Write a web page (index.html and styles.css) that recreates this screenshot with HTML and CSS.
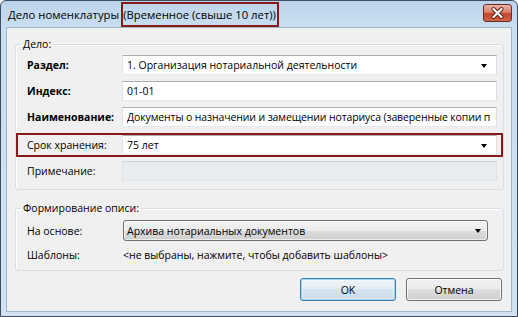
FILE: index.html
```html
<!DOCTYPE html>
<html lang="ru">
<head>
<meta charset="utf-8">
<title>Дело номенклатуры</title>
<link rel="stylesheet" href="styles.css">
</head>
<body>
<div class="window">
  <div class="titlebar">
    <span class="t1">Дело номенклатуры</span>
    <span class="hl">(Временное (свыше 10 лет))</span>
    <div class="close">
      <svg width="29" height="18" viewBox="0 0 29 18">
        <path d="M10.5 5 L18.5 13 M18.5 5 L10.5 13" stroke="#5a1d12" stroke-width="4" stroke-linecap="round"/>
        <path d="M10.5 5 L18.5 13 M18.5 5 L10.5 13" stroke="#ffffff" stroke-width="2.2" stroke-linecap="round"/>
      </svg>
    </div>
  </div>
  <div class="client">
    <fieldset class="group g1">
      <legend>Дело:</legend>
      <div class="rows">
        <div class="row"><label class="b">Раздел:</label><div class="field combo"><span class="val">1. Организация нотариальной деятельности</span><span class="arrow"></span></div></div>
        <div class="row"><label class="b">Индекс:</label><div class="field"><span class="val">01-01</span></div></div>
        <div class="row"><label class="b">Наименование:</label><div class="field"><span class="val name">Документы о назначении и замещении нотариуса (заверенные копии п</span></div></div>
        <div class="row hlrow"><label>Срок хранения:</label><div class="field combo"><span class="val">75 лет</span><span class="arrow"></span></div></div>
        <div class="row"><label class="muted">Примечание:</label><div class="field disabled"></div></div>
      </div>
    </fieldset>
    <fieldset class="group g2">
      <legend>Формирование описи:</legend>
      <div class="rows rows2">
        <div class="row row-btn"><label>На основе:</label><div class="dropdown"><span class="val">Архива нотариальных документов</span><span class="arrow"></span></div></div>
        <div class="row row-tpl"><label>Шаблоны:</label><span class="link">&lt;не выбраны, нажмите, чтобы добавить шаблоны&gt;</span></div>
      </div>
    </fieldset>
    <div class="buttons">
      <button class="btn default">OK</button>
      <button class="btn">Отмена</button>
    </div>
  </div>
</div>
</body>
</html>
```
FILE: styles.css
```css
* { box-sizing: border-box; }
html, body { margin: 0; padding: 0; }
body {
  width: 518px;
  height: 317px;
  overflow: hidden;
  background: #ffffff;
  font-family: "Open Sans", "Segoe UI", sans-serif;
  font-size: 10.5px;
  color: #000;
}
.window {
  width: 518px;
  height: 317px;
  border: 1px solid #3d4d5e;
  border-radius: 6px 6px 0 0;
  background: linear-gradient(180deg, #bcd4eb 0px, #cadef1 27px, #d0e2f3 100%);
  padding: 0 5px 4px 5px;
  display: flex;
  flex-direction: column;
}
.titlebar {
  height: 26px;
  display: flex;
  align-items: flex-end;
  flex: none;
  font-size: 11.3px;
}
.t1 {
  height: 25px;
  display: flex;
  align-items: center;
  padding-left: 2px;
  margin-right: 2px;
}
.hl {
  height: 25px;
  display: flex;
  align-items: center;
  border: 2px solid #8a1a1a;
  padding: 0 1px 0 0;
}
.close {
  align-self: flex-start;
  margin: 3px 0 0 auto;
  width: 29px;
  height: 18px;
  border: 1px solid #6e2b22;
  border-radius: 3px;
  background: linear-gradient(180deg, #eab3a6 0%, #d9806c 45%, #c5432c 55%, #d0664c 100%);
  display: flex;
  align-items: center;
  justify-content: center;
}
.close svg { display: block; margin: -1px; }
.client {
  flex: 1;
  background: #f0f0f0;
  border: 1px solid #a3b6c9;
  padding: 9px 7px 0 8px;
  display: flex;
  flex-direction: column;
}
.group {
  margin: 0;
  padding: 0 0 8px 0;
  border: 1px solid #d5dfe5;
  border-radius: 3px;
  min-width: 0;
  box-shadow: inset 1px 1px 0 #ffffff;
}
.group legend {
  margin-left: 5px;
  padding: 0 2px;
  line-height: 15px;
}
.rows {
  display: flex;
  flex-direction: column;
  gap: 6px;
  padding-top: 3px;
}
.row {
  display: flex;
  align-items: center;
  height: 20px;
  padding: 0 6px 0 11px;
}
.row label {
  width: 95px;
  flex: none;
  white-space: nowrap;
}
.row label.b { font-weight: bold; }
.field {
  flex: 1;
  min-width: 0;
  height: 20px;
  border: 1px solid;
  border-color: #abadb3 #dbdfe6 #e3e9ef #e2e3ea;
  background: #ffffff;
  padding-left: 4px;
  display: flex;
  align-items: center;
  white-space: nowrap;
  overflow: hidden;
}
.field .val { flex: 1; overflow: hidden; }
.field .name { letter-spacing: -0.12px; }
.arrow {
  flex: none;
  width: 0;
  height: 0;
  border-left: 3.5px solid transparent;
  border-right: 3.5px solid transparent;
  border-top: 4px solid #000;
  margin: 1px 9px 0 4px;
}
.hlrow {
  height: 24px;
  border: 2px solid #8a1a1a;
  padding: 0 4px 0 9px;
  margin-bottom: -2px;
}
.field.disabled {
  background: #e8ecef;
  border-color: #cdd4da #dde2e6 #e3e7ea #dde2e6;
}
.g2 { margin-top: 11px; padding-bottom: 5px; }
.rows2 { gap: 4px; padding-top: 4px; }
.row-btn { height: 21px; padding-right: 15px; }
.row-btn label, .row-tpl label { width: 96px; }
.dropdown {
  flex: 1;
  height: 21px;
  border: 1px solid #707070;
  border-radius: 3px;
  background: linear-gradient(180deg, #f2f2f2 0%, #ebebeb 50%, #dddddd 50%, #cfcfcf 100%);
  box-shadow: inset 0 0 0 1px rgba(255,255,255,0.6);
  padding-left: 3px;
  display: flex;
  align-items: center;
  white-space: nowrap;
}
.dropdown .val { flex: 1; }
.dropdown .arrow { margin-right: 6px; }
.link { white-space: nowrap; }
.buttons {
  display: flex;
  justify-content: flex-end;
  gap: 10px;
  margin-top: 7px;
  padding-right: 2px;
}
.btn {
  width: 96px;
  height: 23px;
  font: inherit;
  color: #000;
  border: 1px solid #707070;
  border-radius: 3px;
  background: linear-gradient(180deg, #f2f2f2 0%, #ebebeb 50%, #dddddd 50%, #cfcfcf 100%);
  box-shadow: inset 0 0 0 1px rgba(255,255,255,0.7);
  padding: 0;
}
.btn.default {
  border-color: #3c7fb1;
  background: linear-gradient(180deg, #f1f6fa 0%, #e4edf4 50%, #d6e4ee 50%, #cadcea 100%);
  box-shadow: inset 0 0 0 1px #9fd3ee, inset 0 0 0 2px rgba(255,255,255,0.4);
}
```
